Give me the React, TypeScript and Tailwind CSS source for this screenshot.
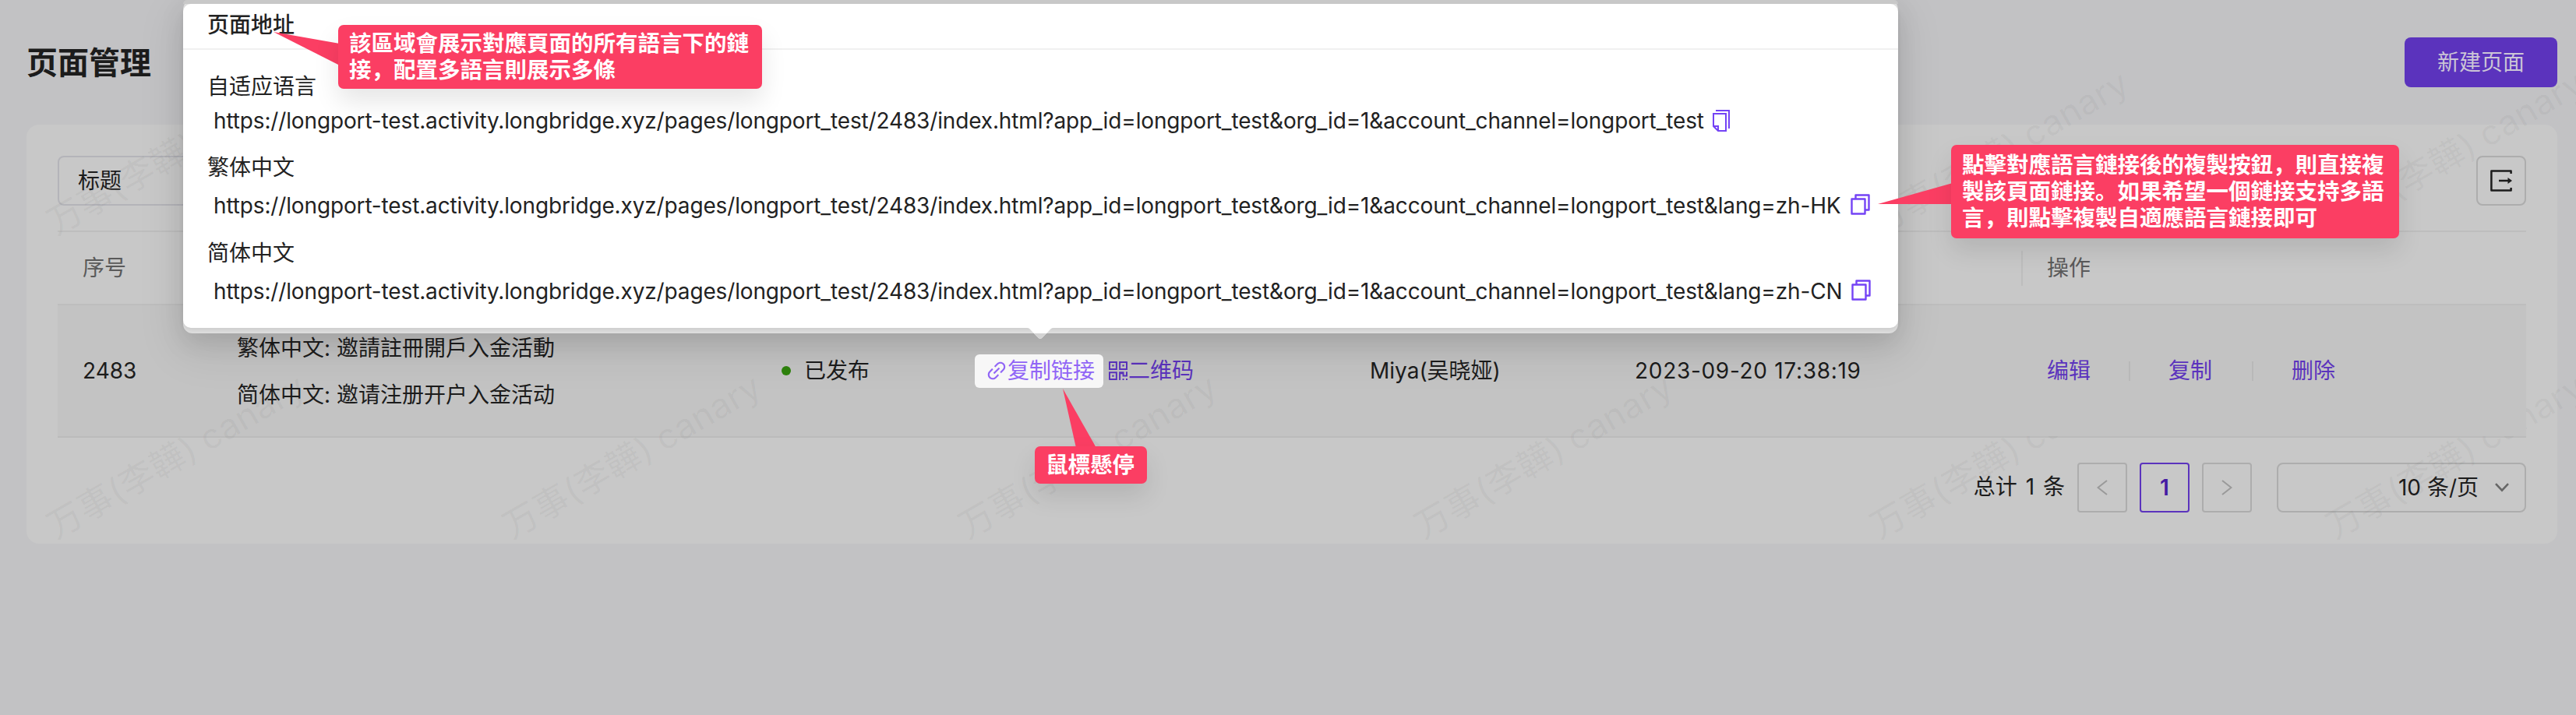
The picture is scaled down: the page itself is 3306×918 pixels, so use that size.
import React from "react";
import { AiOutlineLink, AiOutlineQrcode } from "react-icons/ai";

const BASE =
  "https://longport-test.activity.longbridge.xyz/pages/longport_test/2483/index.html?app_id=longport_test&org_id=1&account_channel=longport_test";

const COLS = "grid grid-cols-[198px_698px_248px_509px_341px_526px_648px]";

function Watermarks() {
  const tiles = [305, 695].flatMap((y) => [0, 1, 2, 3, 4, 5].map((k) => ({ x: 57 + k * 585, y })));
  return (
    <svg className="pointer-events-none absolute inset-0" width="3306" height="918">
      {tiles.map((t) => (
        <text
          key={`${t.x}-${t.y}`}
          transform={`translate(${t.x + 15} ${t.y - 2}) rotate(-30)`}
          fontSize="45"
          fontWeight="500"
          fill="#000"
          fillOpacity="0.028"
        >
          万事(李韡) canary
        </text>
      ))}
    </svg>
  );
}

function CopyFolded() {
  return (
    <svg width="22" height="28" viewBox="0 0 22 28" fill="none" stroke="#7443f5" strokeWidth="2">
      <path d="M4 1H21V24" />
      <path d="M1 5H17V27H7L1 21Z" />
      <path d="M1 21H7V27" />
    </svg>
  );
}

function CopySquares() {
  return (
    <svg
      className="mb-[4px]"
      width="25"
      height="27"
      viewBox="0 0 25 27"
      fill="none"
      stroke="#7443f5"
      strokeWidth="2.4"
      strokeLinejoin="round"
    >
      <path d="M6.5 6V1.5H23.5V20.5H19" />
      <path d="M1.5 6.5H18.5V25.5H1.5Z" />
    </svg>
  );
}

function ExportIcon() {
  return (
    <svg width="28" height="28" viewBox="0 0 28 28" fill="none" stroke="#1c1c1c" strokeWidth="2.5" strokeLinejoin="round">
      <path d="M26.6 5V1.4H1.4V26.6H26.6V23" />
      <path d="M11 14H23" />
      <path d="M22.5 10L28 14L22.5 18Z" fill="#1c1c1c" stroke="none" />
    </svg>
  );
}

function UrlRow({ text, icon, gap }: { text: string; icon: React.ReactNode; gap: string }) {
  return (
    <div className={`flex h-[44px] items-center pl-[7px] ${gap}`}>
      <span className="whitespace-pre tracking-[-0.145px]">{text}</span>
      {icon}
    </div>
  );
}

function Popover() {
  return (
    <div className="absolute left-[235px] top-0 w-[2201px]">
      <div className="h-[428px] rounded-[12px] bg-[#dedede] shadow-[0_12px_32px_rgba(0,0,0,0.10),0_18px_56px_8px_rgba(0,0,0,0.08)]">
        <div className="h-[5px] rounded-t-[12px] bg-[#c8c8c8]" />
        <div className="h-[416px] rounded-[10px] bg-white text-[#222] shadow-[0_3px_5px_rgba(0,0,0,0.08)]">
          <div className="flex h-[59px] items-center border-b-2 border-[#f0f0f0] pb-[3px] pl-[31px] font-medium">
            页面地址
          </div>
          <div className="flex flex-col pl-[32px] pt-[25px]">
            <div className="-ml-px h-[44px] leading-[44px]">自适应语言</div>
            <UrlRow text={BASE} icon={<CopyFolded />} gap="gap-[11px]" />
            <div className="-ml-px mt-[16px] h-[44px] leading-[44px]">繁体中文</div>
            <div className="h-[5px]" />
            <UrlRow text={BASE + "&lang=zh-HK"} icon={<CopySquares />} gap="gap-[12px]" />
            <div className="-ml-px mt-[17px] h-[44px] leading-[44px]">简体中文</div>
            <div className="h-[5px]" />
            <UrlRow text={BASE + "&lang=zh-CN"} icon={<CopySquares />} gap="gap-[12px]" />
          </div>
        </div>
      </div>
      <svg className="absolute left-[1083px] top-[421px]" width="34" height="15" viewBox="0 0 34 15">
        <path d="M0 0H34C31 0 30 2 28 4L19 13Q17 15 15 13L6 4C4 2 3 0 0 0Z" fill="#fff" />
        <path d="M9 7H25L19 13Q17 15 15 13Z" fill="#d3d3d3" />
      </svg>
    </div>
  );
}

const CALLOUT =
  "absolute rounded-[7px] bg-[#fb3e63] font-bold text-white text-[28.5px] leading-[34px] whitespace-nowrap shadow-[0_16px_32px_rgba(0,0,0,0.10)]";

export default function App() {
  return (
    <div className="relative h-[918px] w-[3306px] overflow-hidden bg-[#c2c2c4] font-[Inter,'Noto_Sans_CJK_SC',sans-serif] text-[28px] text-[#1c1c1c]">
      <header className="flex h-[160px] items-start justify-between pl-[34px] pr-[24px]">
        <h1 className="mt-[51px] text-[40px] font-bold leading-[60px]">页面管理</h1>
        <button className="mt-[48px] flex h-[64px] w-[196px] items-center justify-center rounded-[8px] bg-[#5b33bd] text-[#cbc5d6]">
          新建页面
        </button>
      </header>

      <main className="ml-[34px] h-[538px] w-[3248px] rounded-[16px] bg-[#c8c8c8] px-[40px] pt-[40px]">
        <div className="flex justify-between">
          <div className="flex h-[64px] w-[400px] items-center rounded-[8px] border-2 border-[#b4b4b9] pl-[24px]">
            标题
          </div>
          <button className="flex h-[64px] w-[64px] items-center justify-center rounded-[8px] border-2 border-[#adadad]">
            <ExportIcon />
          </button>
        </div>

        <div className={`${COLS} mt-[32px] h-[96px] items-center border-y-2 border-[#bebebe] text-[#5a5a5a]`}>
          <div className="pl-[32px]">序号</div>
          <div />
          <div />
          <div />
          <div />
          <div />
          <div className="flex h-[45px] items-center border-l-2 border-[#bdbdbd] pl-[31px]">操作</div>
        </div>

        <div className={`${COLS} h-[170px] items-center border-b-2 border-[#bbb] bg-[#c3c3c3]`}>
          <div className="pl-[32px]">2483</div>
          <div className="pl-[32px] pt-[2px] leading-[60px]">
            <div>繁体中文: 邀請註冊開戶入金活動</div>
            <div>简体中文: 邀请注册开户入金活动</div>
          </div>
          <div className="flex items-center gap-[17px] pl-[33px]">
            <span className="h-[12px] w-[12px] rounded-full bg-[#2e830d]" />
            已发布
          </div>
          <div className="flex items-center pl-[33px] text-[#5b33bd]">
            <span className="relative z-10 flex h-[43px] w-[165px] items-center rounded-[6px] bg-[#f7f7f7] pl-[13px] text-[#9065f6]">
              <AiOutlineLink size={30} className="-mr-px" />
              复制链接
            </span>
            <span className="ml-[3px] flex items-center">
              <AiOutlineQrcode size={32} className="-mr-[3px]" />
              二维码
            </span>
          </div>
          <div className="pl-[31px]">Miya(吴晓娅)</div>
          <div className="pl-[30px] tracking-[0.7px]">2023-09-20 17:38:19</div>
          <div className="relative z-10 flex h-[168px] items-center bg-[#c3c3c3] pl-[33px] text-[#5b33bd]">
            <span>编辑</span>
            <span className="ml-[49px] h-[25px] w-[2px] bg-[#b8b8b8]" />
            <span className="ml-[49px]">复制</span>
            <span className="ml-[51px] h-[25px] w-[2px] bg-[#b8b8b8]" />
            <span className="ml-[49px]">删除</span>
          </div>
        </div>

        <div className="mt-[32px] flex h-[64px] items-center justify-end">
          <span className="mr-[16px] pb-[3px] [word-spacing:3px]">总计 1 条</span>
          <span className="mr-[16px] flex h-[64px] w-[64px] items-center justify-center rounded-[4px] border-2 border-[#adadad] text-[#999]">
            <svg width="14" height="20" viewBox="0 0 14 20" fill="none" stroke="currentColor" strokeWidth="2">
              <path d="M13 1L1.5 10L13 19" />
            </svg>
          </span>
          <span className="mr-[16px] flex h-[64px] w-[64px] items-center justify-center rounded-[4px] border-2 border-[#5b33bd] font-semibold text-[#451aa3]">
            1
          </span>
          <span className="mr-[32px] flex h-[64px] w-[64px] items-center justify-center rounded-[4px] border-2 border-[#adadad] text-[#999]">
            <svg width="14" height="20" viewBox="0 0 14 20" fill="none" stroke="currentColor" strokeWidth="2">
              <path d="M1 1L12.5 10L1 19" />
            </svg>
          </span>
          <span className="flex h-[64px] w-[320px] items-center justify-end rounded-[8px] border-2 border-[#adadad] pr-[20px]">
            <span className="pb-px">10 条/页</span>
            <svg
              className="ml-[21px]"
              width="18"
              height="12"
              viewBox="0 0 18 12"
              fill="none"
              stroke="#666"
              strokeWidth="2.6"
            >
              <path d="M1 1.2L9 9.6L17 1.2" />
            </svg>
          </span>
        </div>
      </main>

      <Watermarks />
      <Popover />

      <svg className="absolute inset-0" width="3306" height="918">
        <path d="M351 41L436 56V84Z" fill="#fb3e63" />
        <path d="M2410 262L2506 235V262Z" fill="#fb3e63" />
        <path d="M1364 499L1407 575H1381Z" fill="#fb3e63" />
      </svg>
      <div className={`${CALLOUT} left-[434px] top-[32px] h-[82px] w-[544px] pl-[14px] pt-[7px]`}>
        <div>該區域會展示對應頁面的所有語言下的鏈</div>
        <div>接，配置多語言則展示多條</div>
      </div>
      <div className={`${CALLOUT} left-[2504px] top-[186px] h-[120px] w-[575px] pl-[14px] pt-[9px]`}>
        <div>點擊對應語言鏈接後的複製按鈕，則直接複</div>
        <div>製該頁面鏈接。如果希望一個鏈接支持多語</div>
        <div>言，則點擊複製自適應語言鏈接即可</div>
      </div>
      <div className={`${CALLOUT} left-[1328px] top-[573px] h-[48px] w-[144px] pl-[14px] pt-[7px]`}>鼠標懸停</div>
    </div>
  );
}
